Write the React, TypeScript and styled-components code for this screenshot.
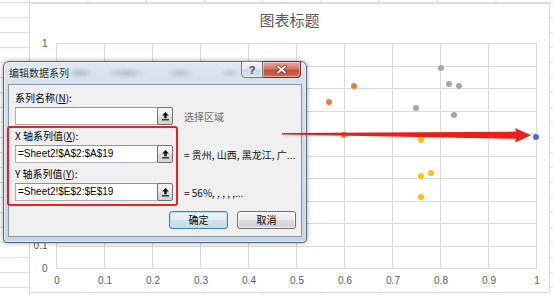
import React from 'react'
import styled, { createGlobalStyle } from 'styled-components'

// ─── Constants ────────────────────────────────────────────────────────────────

const CJK = `"Noto Sans CJK SC", "Noto Sans", sans-serif`
const LATIN = `"Liberation Sans", Arial, sans-serif`

const X0 = 56
const XSTEP = 48
const Y0 = 268
const YSTEP = 22.5

const series = [
    { color: '#ed7d31', points: [[329, 102], [354, 86], [344, 135]] },
    { color: '#a5a5a5', points: [[441, 68], [449, 84], [459, 86], [416, 108], [454, 115]] },
    { color: '#ffc000', points: [[421, 140], [421, 176], [431, 173], [421, 197]] },
    { color: '#4472c4', points: [[536, 137]] },
]

const ticks = Array.from({ length: 11 }, (_, i) => i)
// y labels 0.2 … 0.9 sit under the dialog, only these show
const visibleYTicks = [0, 1, 10]
const tickLabel = (i: number) => (i === 10 ? '1' : i === 0 ? '0' : `0.${i}`)

// ─── Styled components ────────────────────────────────────────────────────────

const GlobalStyle = createGlobalStyle`
    html, body {
        margin: 0;
        padding: 0;
        background: #fff;
    }
    body {
        width: 553px;
        height: 295px;
        overflow: hidden;
    }
`

const Sheet = styled.div`
    position: relative;
    width: 553px;
    height: 295px;
    box-sizing: border-box;
    overflow: hidden;
    padding: 3px 3px 2px 29px;
    background-color: #fff;
    background-image:
        linear-gradient(to right, #dedede 1px, transparent 1px),
        linear-gradient(to bottom, #dedede 1px, transparent 1px);
    background-size: 58.3px 100%, 100% 15px;
    background-position: 29px 0, 0 2px;
`

const Chart = styled.div`
    width: 521px;
    height: 290px;
    box-sizing: border-box;
    border: 1px solid #d9d9d9;
    background: #fff;
    display: flex;
    flex-direction: column;
`

const ChartTitle = styled.div`
    height: 33px;
    box-sizing: border-box;
    padding-top: 5px;
    line-height: 22px;
    text-align: center;
    font-family: ${CJK};
    font-size: 15px;
    color: #595959;
`

const Plot = styled.svg`
    display: block;
    width: 519px;
    height: 255px;
    font-family: ${LATIN};
    font-size: 10px;
`

const Dialog = styled.div`
    position: absolute;
    left: 3px;
    top: 61px;
    width: 304px;
    height: 182px;
    box-sizing: border-box;
    border: 1px solid #56667a;
    border-radius: 6px 6px 4px 4px;
    padding: 0 4px 5px 4px;
    display: flex;
    flex-direction: column;
    background:
        radial-gradient(ellipse 14px 6px at 76px 11px, rgba(110, 125, 140, 0.35), transparent),
        radial-gradient(ellipse 20px 6px at 122px 11px, rgba(110, 125, 140, 0.35), transparent),
        radial-gradient(ellipse 14px 6px at 176px 11px, rgba(110, 125, 140, 0.3), transparent),
        radial-gradient(ellipse 10px 5px at 226px 11px, rgba(110, 125, 140, 0.25), transparent),
        linear-gradient(to bottom, #dfe8f1 0px, #d3dfeb 22px, #c6d6e7 100%);
    box-shadow: 0 0 5px rgba(0, 0, 0, 0.35), inset 0 0 0 1px rgba(255, 255, 255, 0.55);
`

const TitleBar = styled.div`
    height: 22px;
    display: flex;
    align-items: flex-start;
`

const TitleText = styled.span`
    padding: 4px 0 0 1px;
    font-family: ${CJK};
    font-size: 10px;
    line-height: 14px;
    color: #1e1e1e;
    text-shadow: 0 0 6px #fff, 0 0 3px #fff;
`

const CaptionButtons = styled.div`
    display: flex;
    margin: -1px 1px 0 auto;
`

const CaptionButton = styled.div<{ $close?: boolean }>`
    width: ${p => (p.$close ? '38px' : '22px')};
    height: 17px;
    box-sizing: border-box;
    display: flex;
    align-items: center;
    justify-content: center;
    border: 1px solid ${p => (p.$close ? '#6e2b25' : '#6d7b8c')};
    border-left-width: ${p => (p.$close ? '0' : '1px')};
    border-radius: ${p => (p.$close ? '0 0 4px 0' : '0 0 0 4px')};
    background: ${p =>
        p.$close
            ? 'linear-gradient(to bottom, #e9a99b 0%, #d47768 45%, #c44c3c 55%, #cf6a52 100%)'
            : 'linear-gradient(to bottom, #f3f6fa 0%, #e1e8f0 45%, #cfd9e5 55%, #dbe3ec 100%)'};
    box-shadow: inset 0 0 0 1px rgba(255, 255, 255, 0.45);
    font-family: ${LATIN};
    font-size: 11px;
    font-weight: bold;
    color: #3a4452;
`

const Panel = styled.div`
    position: relative;
    flex: 1;
    border: 1px solid #8796a8;
    background: #f0f0f0;
    padding: 6px 5px 0 6px;
    display: flex;
    flex-direction: column;
    gap: 4px;
`

const Field = styled.div`
    display: flex;
    flex-direction: column;
    gap: 2px;
`

const FieldLabel = styled.div`
    height: 14px;
    line-height: 14px;
    font-family: ${CJK};
    font-size: 10px;
    color: #000;

    u {
        text-underline-offset: 1px;
    }
`

const FieldRow = styled.div`
    display: flex;
    align-items: center;
    height: 18px;
`

const RefInput = styled.div`
    width: 143px;
    height: 18px;
    box-sizing: border-box;
    border: 1px solid #abadb3;
    border-top-color: #8f939b;
    background: #fff;
    padding-left: 2px;
    line-height: 16px;
    font-family: ${LATIN};
    font-size: 10px;
    color: #000;
    white-space: nowrap;
`

const CollapseButton = styled.div`
    width: 16px;
    height: 18px;
    box-sizing: border-box;
    margin-left: -1px;
    border: 1px solid #707070;
    border-radius: 2px;
    background: linear-gradient(to bottom, #f6f6f6 0%, #ebebeb 50%, #dddddd 50%, #d2d2d2 100%);
    display: flex;
    align-items: center;
    justify-content: center;
`

const Note = styled.span<{ $muted?: boolean }>`
    margin-left: 11px;
    font-family: ${CJK};
    font-size: 10px;
    color: ${p => (p.$muted ? '#6d6d6d' : '#111')};
    white-space: nowrap;
`

const ButtonRow = styled.div`
    display: flex;
    justify-content: flex-end;
    gap: 9px;
    margin-top: 6px;
`

const DialogButton = styled.div<{ $default?: boolean }>`
    width: 59px;
    height: 18px;
    box-sizing: border-box;
    border: 1px solid ${p => (p.$default ? '#3d86b3' : '#707070')};
    border-radius: 3px;
    background: ${p =>
        p.$default
            ? 'linear-gradient(to bottom, #eef5f9 0%, #e2edf3 50%, #d3e3ec 50%, #c8dce7 100%)'
            : 'linear-gradient(to bottom, #f4f4f4 0%, #ebebeb 50%, #dddddd 50%, #d0d0d0 100%)'};
    box-shadow: inset 0 0 0 1px ${p => (p.$default ? '#b8e0f5' : 'rgba(255,255,255,0.7)')};
    text-align: center;
    line-height: 16px;
    font-family: ${CJK};
    font-size: 10px;
    color: #000;
`

// annotation drawn over the screenshot
const Highlight = styled.div`
    position: absolute;
    left: -2px;
    top: 41px;
    width: 171px;
    height: 80px;
    box-sizing: border-box;
    border: 2px solid #e32420;
    border-radius: 3px;
    pointer-events: none;
`

const ArrowLayer = styled.svg`
    position: absolute;
    left: 0;
    top: 0;
    width: 553px;
    height: 295px;
    pointer-events: none;
`

// ─── Icons ────────────────────────────────────────────────────────────────────

function CollapseIcon() {
    return (
        <svg width="9" height="10" viewBox="0 0 9 10">
            <path d="M4.5 1 L8 4.6 H5.7 V7.2 H3.3 V4.6 H1 Z" fill="#111" />
            <rect x="1" y="8.2" width="7" height="1.2" fill="#111" />
        </svg>
    )
}

function CloseGlyph() {
    return (
        <svg width="11" height="9" viewBox="0 0 11 9">
            <path d="M2 1.5 L9 7.5 M9 1.5 L2 7.5" stroke="#6a2a22" strokeWidth="3.4" strokeLinecap="round" />
            <path d="M2 1.5 L9 7.5 M9 1.5 L2 7.5" stroke="#fff" strokeWidth="2" strokeLinecap="round" />
        </svg>
    )
}

// ─── Component ────────────────────────────────────────────────────────────────

function ScatterPlot() {
    return (
        <Plot viewBox="30 37 519 255">
            {ticks.map(i => (
                <line key={`v${i}`} x1={X0 + i * XSTEP + 0.5} x2={X0 + i * XSTEP + 0.5} y1={43} y2={Y0} stroke="#d9d9d9" />
            ))}
            {ticks.map(i => (
                <line key={`h${i}`} x1={X0} x2={X0 + 10 * XSTEP + 1} y1={Math.round(Y0 - i * YSTEP) + 0.5} y2={Math.round(Y0 - i * YSTEP) + 0.5} stroke="#d9d9d9" />
            ))}
            {ticks.map(i => (
                <text key={`xl${i}`} x={X0 + i * XSTEP + 1} y={283.5} textAnchor="middle" fill="#595959">
                    {tickLabel(i)}
                </text>
            ))}
            {visibleYTicks.map(i => (
                <text key={`yl${i}`} x={47.5} y={Y0 - i * YSTEP + 3.5} textAnchor="end" fill="#595959">
                    {tickLabel(i)}
                </text>
            ))}
            {series.map(s =>
                s.points.map(([x, y], k) => <circle key={`${s.color}${k}`} cx={x} cy={y} r={3} fill={s.color} />)
            )}
        </Plot>
    )
}

export default function App() {
    return (
        <>
            <GlobalStyle />
            <Sheet>
                <Chart>
                    <ChartTitle>图表标题</ChartTitle>
                    <ScatterPlot />
                </Chart>

                <Dialog>
                    <TitleBar>
                        <TitleText>编辑数据系列</TitleText>
                        <CaptionButtons>
                            <CaptionButton>?</CaptionButton>
                            <CaptionButton $close>
                                <CloseGlyph />
                            </CaptionButton>
                        </CaptionButtons>
                    </TitleBar>
                    <Panel>
                        <Field>
                            <FieldLabel>系列名称(<u>N</u>):</FieldLabel>
                            <FieldRow>
                                <RefInput />
                                <CollapseButton><CollapseIcon /></CollapseButton>
                                <Note $muted>选择区域</Note>
                            </FieldRow>
                        </Field>
                        <Field>
                            <FieldLabel>X 轴系列值(<u>X</u>):</FieldLabel>
                            <FieldRow>
                                <RefInput>=Sheet2!$A$2:$A$19</RefInput>
                                <CollapseButton><CollapseIcon /></CollapseButton>
                                <Note>= 贵州, 山西, 黑龙江, 广...</Note>
                            </FieldRow>
                        </Field>
                        <Field>
                            <FieldLabel>Y 轴系列值(<u>Y</u>):</FieldLabel>
                            <FieldRow>
                                <RefInput>=Sheet2!$E$2:$E$19</RefInput>
                                <CollapseButton><CollapseIcon /></CollapseButton>
                                <Note>= 56%, , , , ,...</Note>
                            </FieldRow>
                        </Field>
                        <ButtonRow>
                            <DialogButton $default>确定</DialogButton>
                            <DialogButton>取消</DialogButton>
                        </ButtonRow>
                        <Highlight />
                    </Panel>
                </Dialog>

                <ArrowLayer viewBox="0 0 553 295">
                    <polygon
                        points="282,133.1 516,131.6 515,128 531,135.3 515,142.6 516,138.8 282,134.5"
                        fill="#e8201c"
                    />
                </ArrowLayer>
            </Sheet>
        </>
    )
}
